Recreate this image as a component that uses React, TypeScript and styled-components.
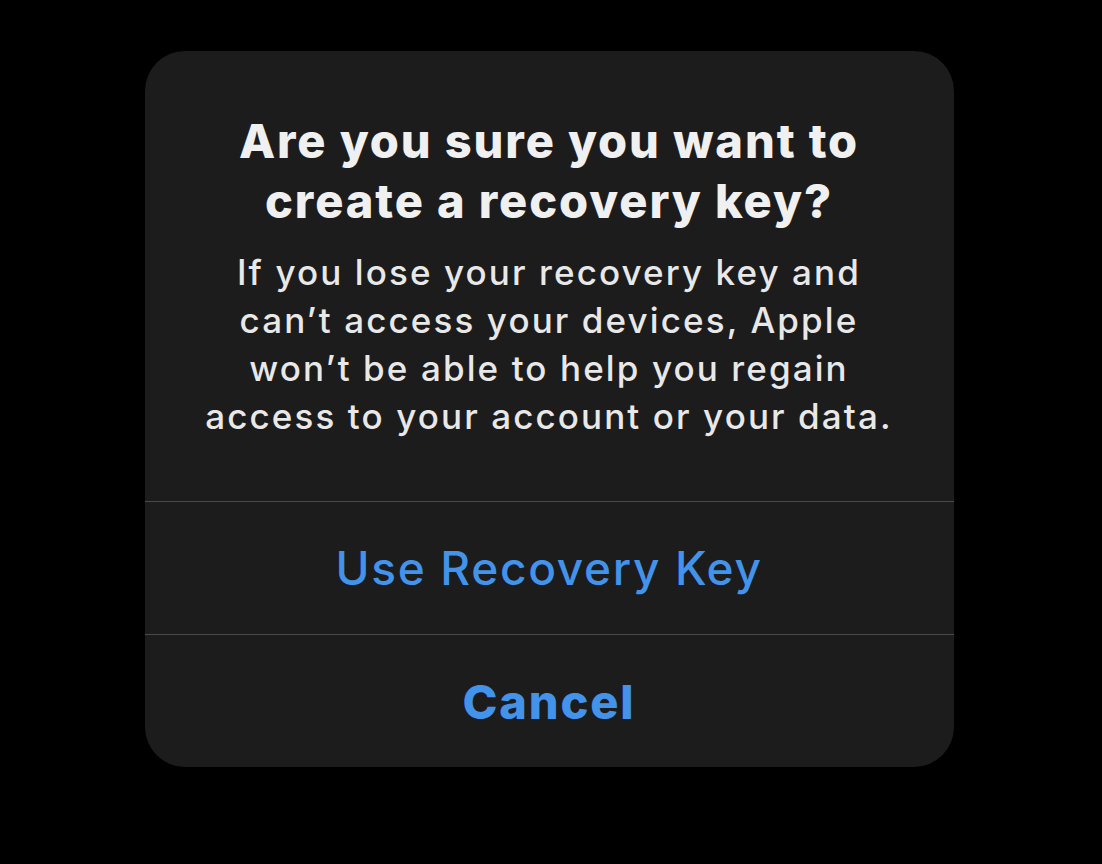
import styled, { createGlobalStyle } from 'styled-components';

const GlobalStyle = createGlobalStyle`
  html, body {
    margin: 0;
    padding: 0;
    background: #000;
  }
  body {
    font-family: Inter, "Noto Sans", "Liberation Sans", sans-serif;
    -webkit-font-smoothing: antialiased;
  }
`;

export default function App() {
  return (
    <>
      <GlobalStyle />
      <Screen>
        <Alert>
          <Message>
            <Title>
              Are you sure you want to
              <br />
              create a recovery key?
            </Title>
            <Body>
              If you lose your recovery key and
              <br />
              can’t access your devices, Apple
              <br />
              won’t be able to help you regain
              <br />
              access to your account or your data.
            </Body>
          </Message>
          <ActionButton type="button">Use Recovery Key</ActionButton>
          <ActionButton type="button" $bold>
            Cancel
          </ActionButton>
        </Alert>
      </Screen>
    </>
  );
}

const Screen = styled.div`
  width: 1102px;
  height: 864px;
  display: flex;
  justify-content: center;
  align-items: flex-start;
  padding-top: 51px;
  box-sizing: border-box;
  background: #000;
`;

const Alert = styled.div`
  width: 809px;
  margin-left: -4px;
  display: flex;
  flex-direction: column;
  background: #1c1c1c;
  border-radius: 40px;
  overflow: hidden;
`;

const Message = styled.div`
  display: flex;
  flex-direction: column;
  align-items: center;
  gap: 17px;
  padding: 60px 20px 61px;
  text-align: center;
`;

const Title = styled.h1`
  margin: 0;
  font-size: 47px;
  line-height: 60px;
  font-weight: 800;
  color: #f0f0f0;
  letter-spacing: 1.9px;
`;

const Body = styled.p`
  margin: 0;
  font-size: 35px;
  line-height: 48px;
  font-weight: 500;
  color: #e8e8e8;
  letter-spacing: 2.1px;
`;

const ActionButton = styled.button<{ $bold?: boolean }>`
  height: 133px;
  display: flex;
  align-items: center;
  justify-content: center;
  border: none;
  border-top: 1px solid #4a4a4c;
  background: transparent;
  color: #4293e9;
  font-family: inherit;
  font-size: ${(p) => (p.$bold ? '47px' : '46px')};
  font-weight: ${(p) => (p.$bold ? 800 : 500)};
  letter-spacing: ${(p) => (p.$bold ? '1.8px' : '1.7px')};
  padding: 0;
  cursor: pointer;
`;
